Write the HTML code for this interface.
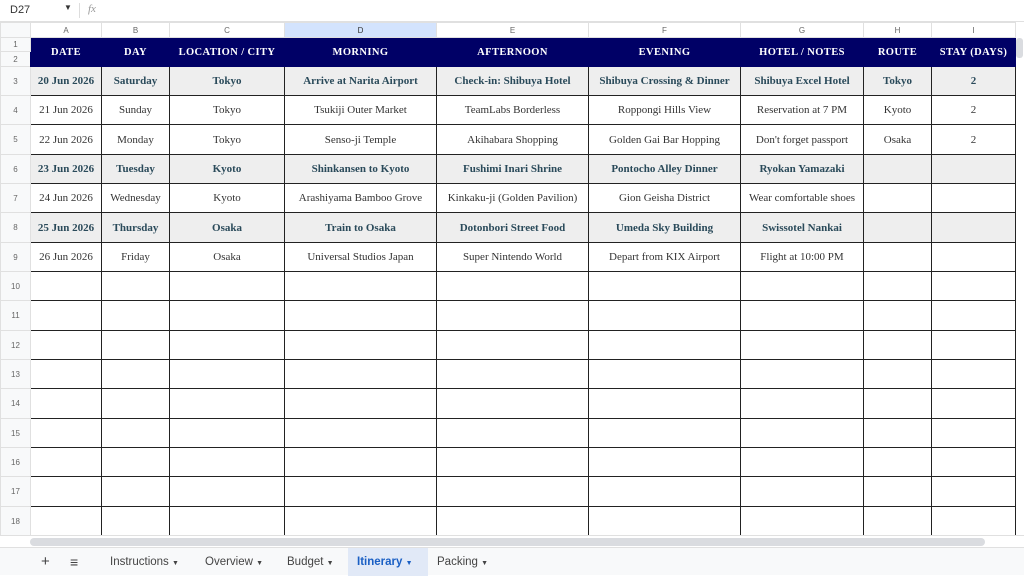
<!DOCTYPE html>
<html><head><meta charset="utf-8"><style>
*{margin:0;padding:0;box-sizing:border-box}
body{width:1024px;height:575px;overflow:hidden;background:#fff;font-family:"Liberation Sans",sans-serif;position:relative}
.fb{position:absolute;left:0;top:0;width:1024px;height:22px;border-bottom:1px solid #e0e0e0;font-size:11px;color:#333}
.sheet{position:absolute;left:0;top:22px;border-collapse:collapse;table-layout:fixed}
.sheet td{border:1px solid #222;text-align:center;font-family:"Liberation Serif",serif;font-size:11px;color:#333;white-space:nowrap;overflow:hidden;padding:0}
.sheet tr.ch td{height:15px;border:1px solid #e0e0e0;font-family:"Liberation Sans",sans-serif;font-size:8px;color:#666;background:#fff}
.sheet td.rh{border:1px solid #e0e0e0;background:#f8f9fa;font-family:"Liberation Sans",sans-serif;font-size:8px;color:#666}
.sheet tr.ch td.sel{background:#d3e3fd;color:#333}
.hd td.h{background:#000066;color:#fff;font-weight:bold;font-size:10.5px;letter-spacing:.4px;border-color:#000066}
.b td{background:#eeeeee;font-weight:bold;color:#2a4a5a}
.b td.rh{font-weight:normal}
.tabs{position:absolute;left:0;top:547px;width:1024px;height:28px;background:#f8f9fa;border-top:1px solid #e0e0e0;font-size:11.5px;color:#444}
.tabs span{position:absolute;top:0;height:28px;line-height:28px}
.sb{position:absolute;left:30px;top:538px;width:955px;height:8px;background:#dadce0;border-radius:4px}
.vs{position:absolute;left:1016px;top:38px;width:7px;height:20px;background:#dadce0;border-radius:3px}
</style></head><body>
<div class="fb"><span style="position:absolute;left:10px;top:4px">D27</span><span style="position:absolute;left:64px;top:3px;font-size:8px">▼</span><span style="position:absolute;left:79px;top:3px;width:1px;height:15px;background:#ddd"></span><span style="position:absolute;left:88px;top:3px;font-style:italic;color:#999;font-family:'Liberation Serif',serif">fx</span></div>
<table class="sheet">
<colgroup><col style="width:30px"><col style="width:71px"><col style="width:68px"><col style="width:115px"><col style="width:152px"><col style="width:152px"><col style="width:152px"><col style="width:123px"><col style="width:68px"><col style="width:84px"></colgroup>
<tr class="ch"><td class="rh" style="background:#f8f9fa"></td><td>A</td><td>B</td><td>C</td><td class="sel">D</td><td>E</td><td>F</td><td>G</td><td>H</td><td>I</td></tr>
<tr class="hd" style="height:14px"><td class="rh">1</td><td class="h" rowspan="2">DATE</td><td class="h" rowspan="2">DAY</td><td class="h" rowspan="2">LOCATION / CITY</td><td class="h" rowspan="2">MORNING</td><td class="h" rowspan="2">AFTERNOON</td><td class="h" rowspan="2">EVENING</td><td class="h" rowspan="2">HOTEL / NOTES</td><td class="h" rowspan="2">ROUTE</td><td class="h" rowspan="2">STAY (DAYS)</td></tr>
<tr class="hd" style="height:15px"><td class="rh">2</td></tr>
<tr class="b" style="height:29px"><td class="rh">3</td><td>20 Jun 2026</td><td>Saturday</td><td>Tokyo</td><td>Arrive at Narita Airport</td><td>Check-in: Shibuya Hotel</td><td>Shibuya Crossing &amp; Dinner</td><td>Shibuya Excel Hotel</td><td>Tokyo</td><td>2</td></tr>
<tr style="height:29px"><td class="rh">4</td><td>21 Jun 2026</td><td>Sunday</td><td>Tokyo</td><td>Tsukiji Outer Market</td><td>TeamLabs Borderless</td><td>Roppongi Hills View</td><td>Reservation at 7 PM</td><td>Kyoto</td><td>2</td></tr>
<tr style="height:30px"><td class="rh">5</td><td>22 Jun 2026</td><td>Monday</td><td>Tokyo</td><td>Senso-ji Temple</td><td>Akihabara Shopping</td><td>Golden Gai Bar Hopping</td><td>Don't forget passport</td><td>Osaka</td><td>2</td></tr>
<tr class="b" style="height:29px"><td class="rh">6</td><td>23 Jun 2026</td><td>Tuesday</td><td>Kyoto</td><td>Shinkansen to Kyoto</td><td>Fushimi Inari Shrine</td><td>Pontocho Alley Dinner</td><td>Ryokan Yamazaki</td><td></td><td></td></tr>
<tr style="height:29px"><td class="rh">7</td><td>24 Jun 2026</td><td>Wednesday</td><td>Kyoto</td><td>Arashiyama Bamboo Grove</td><td>Kinkaku-ji (Golden Pavilion)</td><td>Gion Geisha District</td><td>Wear comfortable shoes</td><td></td><td></td></tr>
<tr class="b" style="height:30px"><td class="rh">8</td><td>25 Jun 2026</td><td>Thursday</td><td>Osaka</td><td>Train to Osaka</td><td>Dotonbori Street Food</td><td>Umeda Sky Building</td><td>Swissotel Nankai</td><td></td><td></td></tr>
<tr style="height:29px"><td class="rh">9</td><td>26 Jun 2026</td><td>Friday</td><td>Osaka</td><td>Universal Studios Japan</td><td>Super Nintendo World</td><td>Depart from KIX Airport</td><td>Flight at 10:00 PM</td><td></td><td></td></tr>
<tr style="height:29px"><td class="rh">10</td><td></td><td></td><td></td><td></td><td></td><td></td><td></td><td></td><td></td></tr>
<tr style="height:30px"><td class="rh">11</td><td></td><td></td><td></td><td></td><td></td><td></td><td></td><td></td><td></td></tr>
<tr style="height:29px"><td class="rh">12</td><td></td><td></td><td></td><td></td><td></td><td></td><td></td><td></td><td></td></tr>
<tr style="height:29px"><td class="rh">13</td><td></td><td></td><td></td><td></td><td></td><td></td><td></td><td></td><td></td></tr>
<tr style="height:30px"><td class="rh">14</td><td></td><td></td><td></td><td></td><td></td><td></td><td></td><td></td><td></td></tr>
<tr style="height:29px"><td class="rh">15</td><td></td><td></td><td></td><td></td><td></td><td></td><td></td><td></td><td></td></tr>
<tr style="height:29px"><td class="rh">16</td><td></td><td></td><td></td><td></td><td></td><td></td><td></td><td></td><td></td></tr>
<tr style="height:30px"><td class="rh">17</td><td></td><td></td><td></td><td></td><td></td><td></td><td></td><td></td><td></td></tr>
<tr style="height:29px"><td class="rh">18</td><td></td><td></td><td></td><td></td><td></td><td></td><td></td><td></td><td></td></tr>
<tr style="height:29px"><td class="rh">19</td><td></td><td></td><td></td><td></td><td></td><td></td><td></td><td></td><td></td></tr>
</table>
<div style="position:absolute;left:0;top:535px;width:1024px;height:12px;background:#fff;border-top:1px solid #e0e0e0"></div>
<div class="sb"></div>
<div class="vs"></div>
<div class="tabs">
<span style="left:41px;font-size:15px">+</span>
<span style="left:70px;font-size:14px">≡</span>
<span style="left:110px">Instructions <small style="font-size:7px">▼</small></span>
<span style="left:205px">Overview <small style="font-size:7px">▼</small></span>
<span style="left:287px">Budget <small style="font-size:7px">▼</small></span>
<span style="left:348px;width:80px;background:#e1e9f7;color:#1a5fc4;font-weight:bold;padding-left:9px">Itinerary <small style="font-size:7px">▼</small></span>
<span style="left:437px">Packing <small style="font-size:7px">▼</small></span>
</div>
</body></html>
